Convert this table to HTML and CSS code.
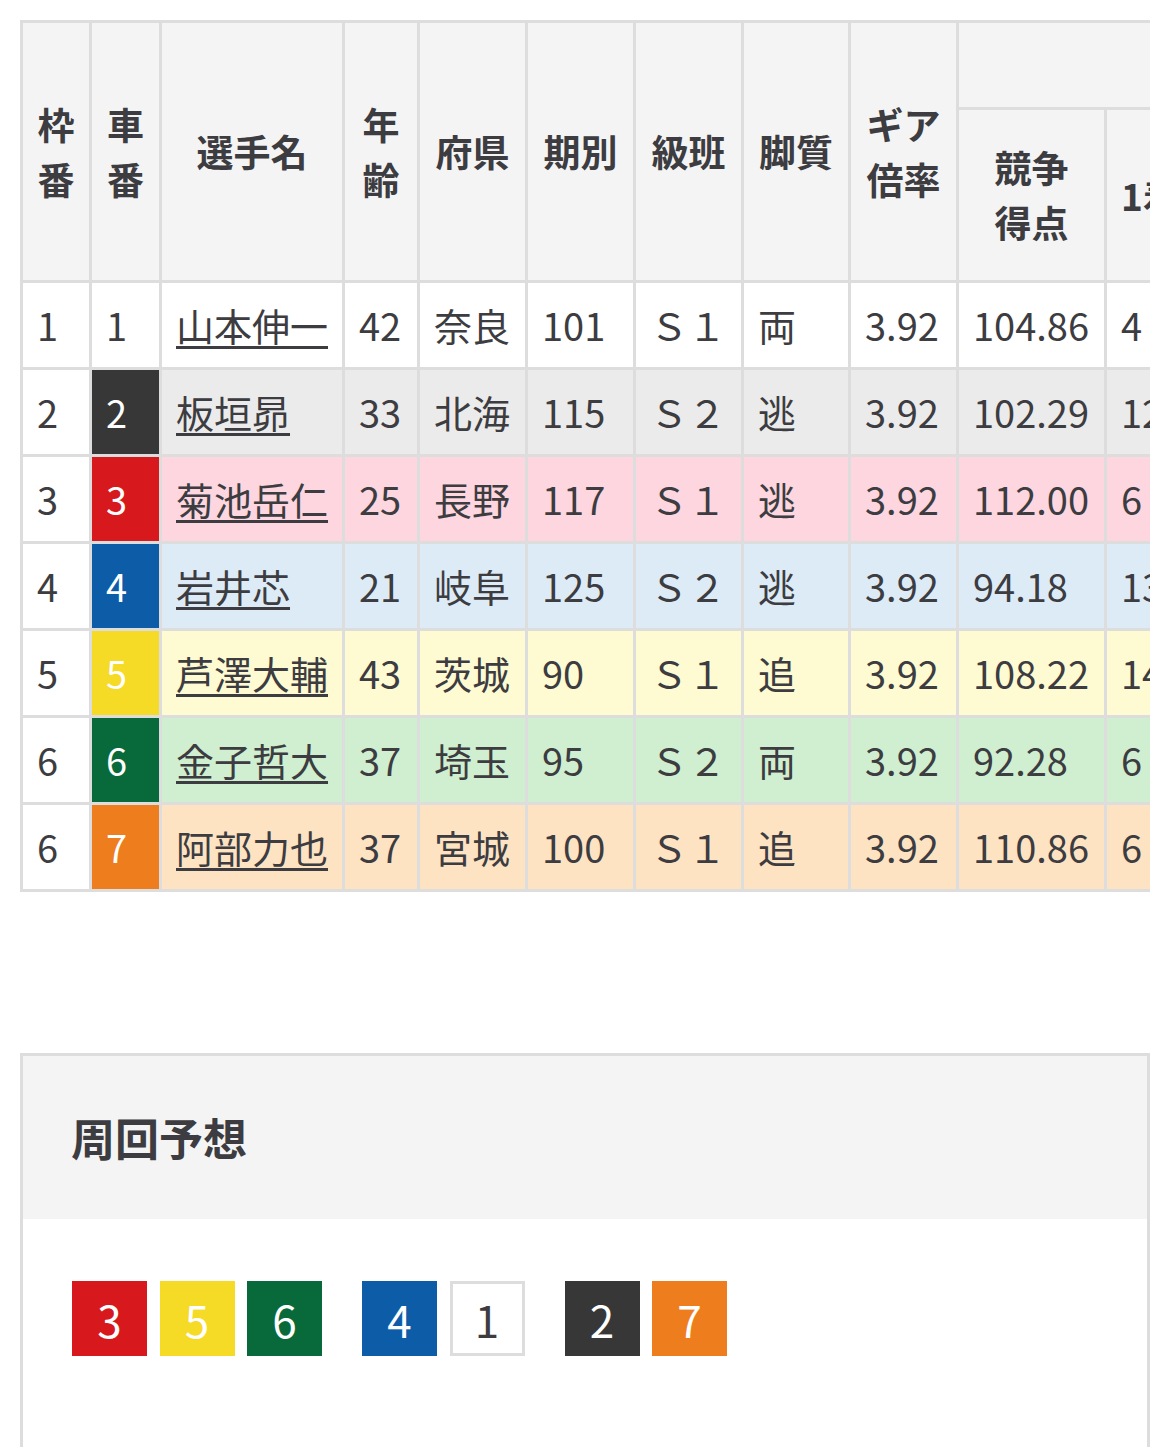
FILE: index.html
```html
<!DOCTYPE html>
<html lang="ja">
<head>
<meta charset="utf-8">
<title>出走表</title>
<link rel="stylesheet" href="styles.css">
</head>
<body>
<div class="page">
  <div class="table-wrap">
    <table class="race">
      <colgroup>
        <col class="c-waku"><col class="c-car"><col class="c-name"><col class="c-age"><col class="c-pref">
        <col class="c-term"><col class="c-class"><col class="c-style"><col class="c-gear"><col class="c-score">
        <col class="c-rec"><col class="c-rec"><col class="c-rec"><col class="c-rec"><col class="c-rec"><col class="c-rec"><col class="c-rec">
      </colgroup>
      <thead>
        <tr class="h-top">
          <th rowspan="2">枠<br>番</th>
          <th rowspan="2">車<br>番</th>
          <th rowspan="2">選手名</th>
          <th rowspan="2">年<br>齢</th>
          <th rowspan="2">府県</th>
          <th rowspan="2">期別</th>
          <th rowspan="2">級班</th>
          <th rowspan="2">脚質</th>
          <th rowspan="2">ギア<br>倍率</th>
          <th colspan="8" class="group">直近4ヶ月の成績</th>
        </tr>
        <tr class="h-sub">
          <th>競争<br>得点</th>
          <th>1着</th><th>2着</th><th>3着</th><th>着外</th><th>勝率</th><th>2連<br>対率</th><th>3連<br>対率</th>
        </tr>
      </thead>
      <tbody>
        <tr class="r1">
          <td class="waku">1</td><td class="car">1</td><td class="name"><a href="#">山本伸一</a></td>
          <td>42</td><td>奈良</td><td>101</td><td>Ｓ１</td><td>両</td><td>3.92</td><td>104.86</td>
          <td>4</td><td>3</td><td>2</td><td>9</td><td>22.2</td><td>38.8</td><td>50.0</td>
        </tr>
        <tr class="r2">
          <td class="waku">2</td><td class="car">2</td><td class="name"><a href="#">板垣昴</a></td>
          <td>33</td><td>北海</td><td>115</td><td>Ｓ２</td><td>逃</td><td>3.92</td><td>102.29</td>
          <td>12</td><td>4</td><td>3</td><td>5</td><td>50.0</td><td>66.6</td><td>79.1</td>
        </tr>
        <tr class="r3">
          <td class="waku">3</td><td class="car">3</td><td class="name"><a href="#">菊池岳仁</a></td>
          <td>25</td><td>長野</td><td>117</td><td>Ｓ１</td><td>逃</td><td>3.92</td><td>112.00</td>
          <td>6</td><td>5</td><td>2</td><td>7</td><td>30.0</td><td>55.0</td><td>65.0</td>
        </tr>
        <tr class="r4">
          <td class="waku">4</td><td class="car">4</td><td class="name"><a href="#">岩井芯</a></td>
          <td>21</td><td>岐阜</td><td>125</td><td>Ｓ２</td><td>逃</td><td>3.92</td><td>94.18</td>
          <td>13</td><td>2</td><td>1</td><td>4</td><td>65.0</td><td>75.0</td><td>80.0</td>
        </tr>
        <tr class="r5">
          <td class="waku">5</td><td class="car">5</td><td class="name"><a href="#">芦澤大輔</a></td>
          <td>43</td><td>茨城</td><td>90</td><td>Ｓ１</td><td>追</td><td>3.92</td><td>108.22</td>
          <td>14</td><td>3</td><td>2</td><td>3</td><td>63.6</td><td>77.2</td><td>86.3</td>
        </tr>
        <tr class="r6">
          <td class="waku">6</td><td class="car">6</td><td class="name"><a href="#">金子哲大</a></td>
          <td>37</td><td>埼玉</td><td>95</td><td>Ｓ２</td><td>両</td><td>3.92</td><td>92.28</td>
          <td>6</td><td>4</td><td>5</td><td>7</td><td>27.2</td><td>45.4</td><td>68.1</td>
        </tr>
        <tr class="r7">
          <td class="waku">6</td><td class="car">7</td><td class="name"><a href="#">阿部力也</a></td>
          <td>37</td><td>宮城</td><td>100</td><td>Ｓ１</td><td>追</td><td>3.92</td><td>110.86</td>
          <td>6</td><td>6</td><td>3</td><td>5</td><td>30.0</td><td>60.0</td><td>75.0</td>
        </tr>
      </tbody>
    </table>
  </div>

  <section class="laps">
    <h2 class="laps-title">周回予想</h2>
    <div class="laps-body">
      <div class="chips">
        <div class="grp">
          <span class="chip k3">3</span><span class="chip k5">5</span><span class="chip k6">6</span>
        </div>
        <div class="grp">
          <span class="chip k4">4</span><span class="chip k1">1</span>
        </div>
        <div class="grp">
          <span class="chip k2">2</span><span class="chip k7">7</span>
        </div>
      </div>
    </div>
  </section>
</div>
</body>
</html>
```

FILE: styles.css
```css
html, body {
  margin: 0;
  padding: 0;
  background: #ffffff;
}

body {
  font-family: "Noto Sans CJK JP", "Noto Sans", sans-serif;
  color: #3c3c41;
}

.page {
  padding: 20px;
}

.table-wrap {
  width: 1130px;
  overflow: hidden;
}

.race {
  table-layout: fixed;
  width: 1717px;
  border-collapse: separate;
  border-spacing: 3px;
  background: #dddddd;
}

.c-waku { width: 66px; }
.c-car { width: 67px; }
.c-name { width: 180px; }
.c-age { width: 72px; }
.c-pref { width: 105px; }
.c-term { width: 105px; }
.c-class { width: 105px; }
.c-style { width: 104px; }
.c-gear { width: 105px; }
.c-score { width: 145px; }
.c-rec { width: 87px; }

.race th {
  background: #f4f4f4;
  font-size: 37px;
  font-weight: 700;
  line-height: 55px;
  padding: 0 14px;
  text-align: center;
  vertical-align: middle;
  white-space: nowrap;
  overflow: hidden;
}

.h-top .group {
  height: 84px;
  text-align: right;
}

.h-sub th {
  height: 170px;
}

.race td {
  height: 84px;
  padding: 0 14px;
  font-size: 38px;
  line-height: 50px;
  text-align: left;
  vertical-align: middle;
  white-space: nowrap;
  overflow: hidden;
  background: #ffffff;
}

.race td.name a {
  color: inherit;
  text-decoration: underline;
  text-decoration-thickness: 3px;
  text-underline-offset: 5px;
}

.race td.car { color: #ffffff; }

.r1 td.car { color: #3c3c41; background: #ffffff; }

.r2 td { background: #ebebeb; }
.r2 td.car { background: #373737; }

.r3 td { background: #fdd6df; }
.r3 td.car { background: #d7181c; }

.r4 td { background: #ddebf7; }
.r4 td.car { background: #0c5ca8; }

.r5 td { background: #fefad1; }
.r5 td.car { background: #f5da26; }

.r6 td { background: #cfefd0; }
.r6 td.car { background: #086a3a; }

.r7 td { background: #fee3c3; }
.r7 td.car { background: #ee7d1d; }

.race td.waku { background: #ffffff; }

/* 周回予想 */
.laps {
  margin-top: 161px;
  width: 1130px;
  box-sizing: border-box;
  border: 3px solid #dddddd;
  border-bottom: none;
}

.laps-title {
  margin: 0;
  background: #f4f4f4;
  padding: 48px 48px 49px;
  font-size: 44px;
  font-weight: 700;
  line-height: 66px;
}

.laps-body {
  padding: 62px 49px 160px;
}

.chips {
  display: flex;
  gap: 40px;
}

.grp {
  display: flex;
  gap: 12.5px;
}

.chip {
  width: 75px;
  height: 75px;
  box-sizing: border-box;
  display: flex;
  align-items: center;
  justify-content: center;
  font-size: 44px;
  line-height: 1;
  color: #ffffff;
}

.k1 { background: #ffffff; border: 3px solid #dddddd; color: #3c3c41; }
.k2 { background: #373737; }
.k3 { background: #d7181c; }
.k4 { background: #0c5ca8; }
.k5 { background: #f5da26; }
.k6 { background: #086a3a; }
.k7 { background: #ee7d1d; }
```
